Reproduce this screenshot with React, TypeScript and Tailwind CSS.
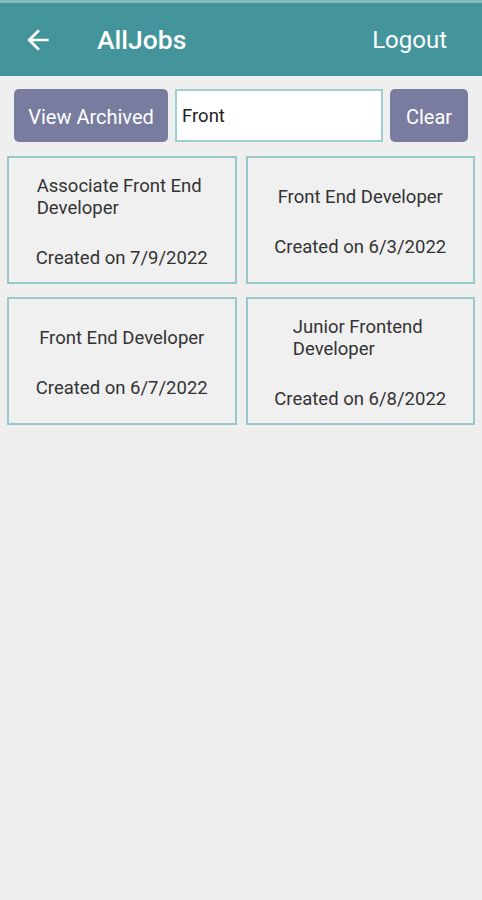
import React from 'react';

type Job = { id: number; title: string[]; created: string };

const jobs: Job[] = [
  { id: 1, title: ['Associate Front End', 'Developer'], created: '7/9/2022' },
  { id: 2, title: ['Front End Developer'], created: '6/3/2022' },
  { id: 3, title: ['Front End Developer'], created: '6/7/2022' },
  { id: 4, title: ['Junior Frontend', 'Developer'], created: '6/8/2022' },
];

function BackArrow() {
  return (
    <svg width="32" height="32" viewBox="0 0 24 24" fill="white">
      <path d="M20 11H7.83l5.59-5.59L12 4l-8 8 8 8 1.41-1.41L7.83 13H20v-2z" />
    </svg>
  );
}

function JobCard({ job }: { job: Job }) {
  return (
    <div className="h-[128px] border-2 border-[#98c9ca] bg-[#f0f0f0] pt-[3px] flex flex-col items-center justify-center">
      <div
        className={`w-fit text-left text-[18.5px] leading-[22px] text-[#333] ${job.title.length > 1 ? 'mr-[5px]' : 'mr-0'}`}
      >
        {job.title.map((line, i) => (
          <React.Fragment key={i}>
            {i > 0 && <br />}
            {line}
          </React.Fragment>
        ))}
      </div>
      <div className="mt-[28px] text-[18.5px] leading-[22px] text-[#333]">Created on {job.created}</div>
    </div>
  );
}

export default function App() {
  return (
    <div className="min-h-[900px] w-[482px] bg-[#efefef] font-['Roboto',sans-serif]">
      {/* Header */}
      <div className="border-t-[3px] border-[#86babd] bg-[#43959b] h-[76px] flex items-center pl-[22px] pr-[35px]">
        <BackArrow />
        <span className="ml-[43px] text-[26.5px] font-medium text-white">AllJobs</span>
        <span className="ml-auto text-[24px] text-white">Logout</span>
      </div>

      {/* Search row */}
      <div className="flex gap-[7px] px-[14px] pt-[13px]">
        <button className="h-[53px] w-[154px] rounded-[5px] bg-[#787c9f] pt-[3px] text-[20px] text-white">View Archived</button>
        <div className="h-[53px] w-[208px] border-2 border-[#9fd0cf] bg-white flex items-center pl-[5px] pt-[2px]">
          <span className="text-[18.5px] text-[#222]">Front</span>
        </div>
        <button className="h-[53px] w-[78px] rounded-[5px] bg-[#787c9f] pt-[3px] text-[20px] text-white">Clear</button>
      </div>

      {/* Job cards */}
      <div className="grid grid-cols-2 gap-x-[9px] gap-y-[13px] px-[7px] pt-[14px]">
        {jobs.map((job) => (
          <JobCard key={job.id} job={job} />
        ))}
      </div>
    </div>
  );
}
